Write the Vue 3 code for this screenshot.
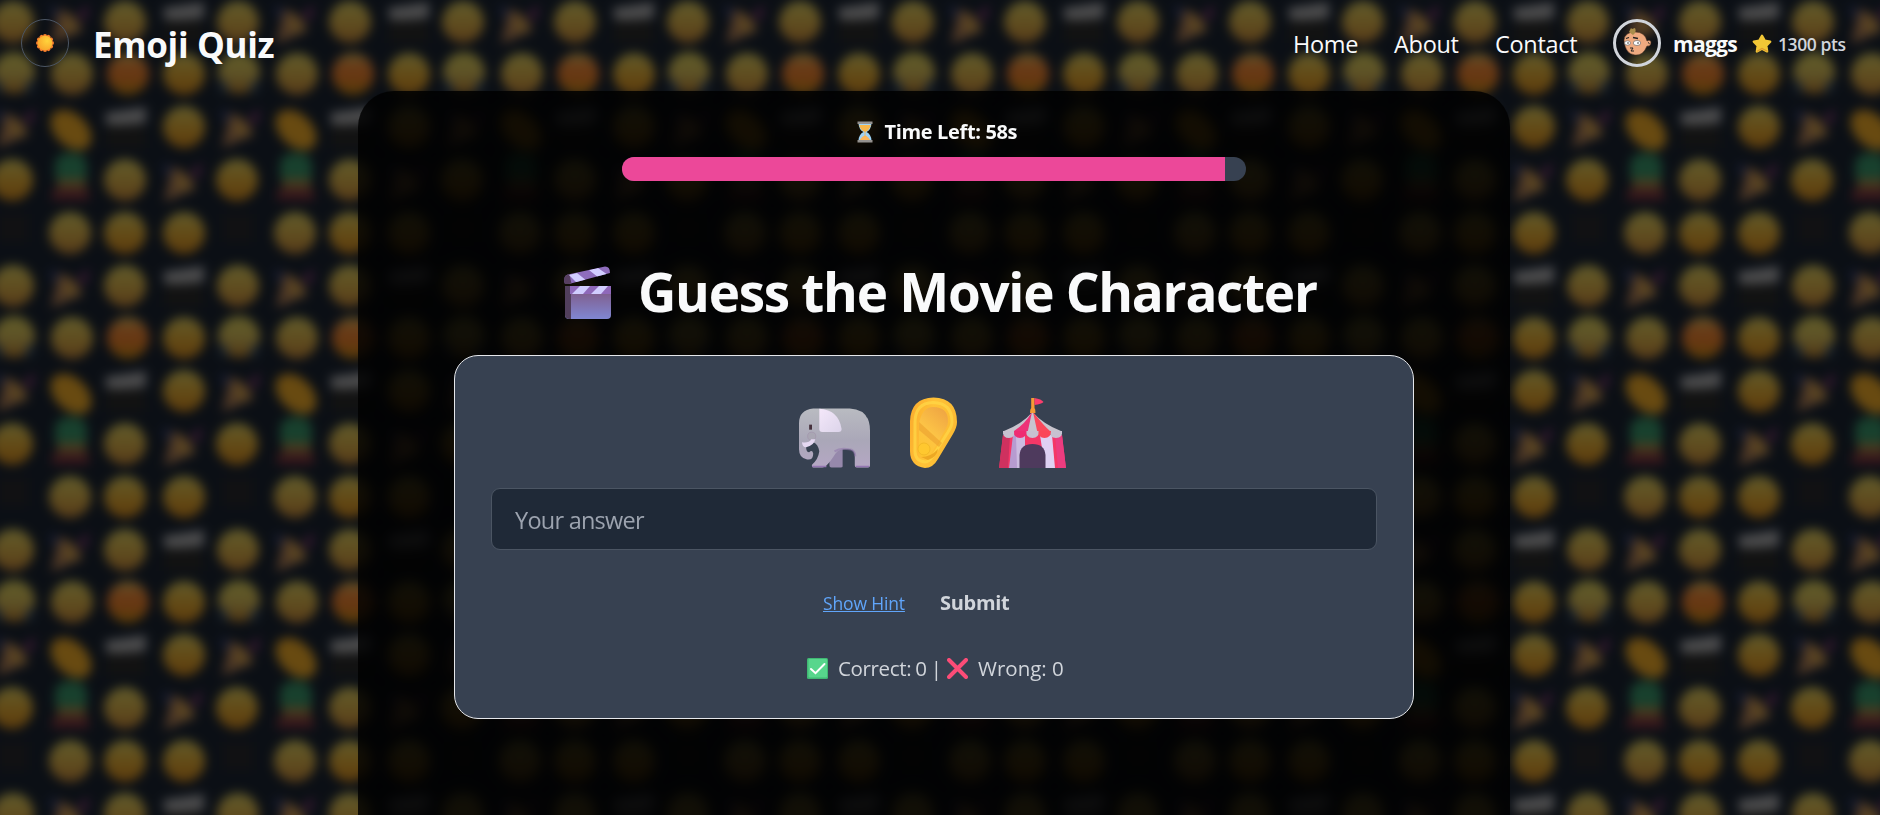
<script setup>
import { ref, computed } from 'vue'

const total = 60
const left = ref(58)
const barWidth = computed(() => (left.value / total) * 100 + '%')
const answer = ref('')
const correct = ref(0)
const wrong = ref(0)
const links = [
  { name: 'Home', cls: 'home' },
  { name: 'About', cls: 'about' },
  { name: 'Contact', cls: 'contact' },
]

// Backdrop tile: one entry per emoji in a 225x264 repeat
const balls = [
  [27, 28, 'a'], [139, 28, 'a'],
  [28, 79, 'c'], [86, 80, 'a'], [142, 80, 'd'], [198, 80, 'b'],
  [198, 133, 'b'],
  [26, 186, 'b'], [139, 186, 'a'],
  [84, 239, 'a'], [139, 239, 'b'], [198, 239, 'b'],
]
const poppers = [[82, 30], [28, 134], [195, 188]]
const clappers = [[198, 20], [140, 125]]
</script>

<template>
  <div class="page">
    <svg class="wallpaper" width="1920" height="855" viewBox="-20 -20 1920 855">
      <defs>
        <linearGradient id="ga" x1="0" y1="0" x2="0" y2="1">
          <stop offset="0" stop-color="#605a2b" /><stop offset=".5" stop-color="#604e20" /><stop offset="1" stop-color="#563a18" />
        </linearGradient>
        <linearGradient id="gb" x1="0" y1="0" x2="0" y2="1">
          <stop offset="0" stop-color="#605a2b" /><stop offset=".5" stop-color="#634b17" /><stop offset="1" stop-color="#5c3b0c" />
        </linearGradient>
        <linearGradient id="gc" x1="0" y1="0" x2="0" y2="1">
          <stop offset="0" stop-color="#605b28" /><stop offset=".5" stop-color="#5e5327" /><stop offset="1" stop-color="#503614" />
        </linearGradient>
        <linearGradient id="gd" x1="0" y1="0" x2="0" y2="1">
          <stop offset="0" stop-color="#60562a" /><stop offset=".3" stop-color="#683b18" /><stop offset=".55" stop-color="#683713" /><stop offset="1" stop-color="#563c08" />
        </linearGradient>
        <pattern id="tile" x="-14" y="-6" width="225" height="264" patternUnits="userSpaceOnUse">
          <circle v-for="(b, i) in balls" :key="'b' + i" :cx="b[0]" :cy="b[1]" r="21" :fill="`url(#g${b[2]})`" />
          <path d="M9 85l7 4v10l-7-1zM47 85l-7 4v10l7-1z" fill="#1a2632" />
          <g v-for="(p, i) in poppers" :key="'p' + i" :transform="`translate(${p[0]} ${p[1]})`">
            <path d="M-9-15Q8-12 15 7L-17 20z" fill="#4e3826" />
            <path d="M-5-8Q8-6 10 6L-2 8z" fill="#5c4720" />
            <path d="M-19-18l9 2-3 14z" fill="#181e38" />
            <path d="M9-9l12-11-3 17z" fill="#3a1a33" />
          </g>
          <g v-for="(c, i) in clappers" :key="'c' + i" :transform="`translate(${c[0]} ${c[1]})`">
            <path d="M-21-6L20-12V4L-19 8z" fill="#4c4c4d" />
            <rect x="-20" y="6" width="39" height="23" fill="#121212" />
          </g>
          <ellipse cx="85" cy="136" rx="24" ry="16" fill="#684a11" transform="rotate(44 85 136)" />
          <path d="M69 185v-13q0-13 16-13t16 13v13z" fill="#18402d" />
          <path d="M71 185h29v10H71z" fill="#49391e" />
          <path d="M66 196h37v10H66z" fill="#3b181c" />
          <rect x="12" y="220" width="30" height="28" fill="#111113" />
        </pattern>
      </defs>
      <rect x="-20" y="-20" width="1920" height="855" fill="#0b0f15" />
      <rect x="-20" y="-20" width="1920" height="855" fill="url(#tile)" />
    </svg>

    <header class="bar">
      <button class="theme" aria-label="Theme">
        <svg width="20" height="20" viewBox="-10 -10 20 20">
          <defs>
            <radialGradient id="sun" cx=".65" cy=".35" r=".7"><stop offset="0" stop-color="#ffd43c" /><stop offset="1" stop-color="#f9a52b" /></radialGradient>
          </defs>
          <g fill="#f9802d">
            <circle v-for="n in 12" :key="n" cx="0" cy="-7" r="2" :transform="`rotate(${n * 30})`" />
          </g>
          <circle r="7.300" fill="url(#sun)" />
        </svg>
      </button>
      <h1 class="brand">Emoji Quiz</h1>
      <nav class="nav">
        <a v-for="l in links" :key="l.name" :class="l.cls">{{ l.name }}</a>
      </nav>
      <div class="user">
        <span class="avatar">
          <svg width="42" height="42" viewBox="0 0 42 42">
            <path d="M8 18Q9 10 19 10Q29 10 31 19Q35 17 35 21Q34 25 31 24Q27 34 19 33Q9 32 8 18z" fill="#eeaa80" stroke="#4a3020" stroke-width=".5" />
            <path d="M13 10l2-4 1 1 3-1Q21 10 17 13z" fill="#a98d4b" />
            <path d="M10 16.500l3-1M17 15.500l5 1" stroke="#222" stroke-width="1.300" />
            <ellipse cx="11.500" cy="21" rx="3" ry="2.200" fill="#fff" stroke="#555" stroke-width=".6" />
            <ellipse cx="21" cy="21" rx="3.700" ry="2.500" fill="#fff" stroke="#555" stroke-width=".6" />
            <circle cx="12" cy="21" r=".7" /><circle cx="22" cy="21" r=".7" />
            <path d="M14 26h3l-2 3h3M32 20.500l1.500 1" stroke="#222" fill="none" stroke-width="1" />
          </svg>
        </span>
        <span class="name">maggs</span>
        <svg class="star" width="20" height="20" viewBox="0 0 20 20">
          <path d="M10 1.800l2.700 4.900 5.500 1-3.900 4 .8 5.700-5.100-2.600-5.100 2.600.8-5.700-3.900-4 5.500-1z" fill="#f2c736" stroke="#f2c736" stroke-width="2.400" stroke-linejoin="round" />
          <path d="M15.500 17.200l-5.500-2.700-5 2.800" fill="none" stroke="#dc9a30" stroke-width="1.200" />
        </svg>
        <span class="points">1300 pts</span>
      </div>
    </header>

    <main class="panel">
      <div class="timer">
        <svg width="16" height="22" viewBox="0 0 16 22">
          <path d="M1.500 2.500h13Q14 9 9.500 11q4.500 2 5 8.500h-13Q2 13 6.500 11 2 9 1.500 2.500z" fill="#9fd3f5" />
          <path d="M2.300 4h11.400Q13 9 8 11 3 9 2.300 4z" fill="#f7b64a" /><path d="M2.500 19.500Q5 15 8 14.500q3 .5 5.500 5z" fill="#fbb65c" />
          <path d="M7.600 10h.8v6h-.8z" fill="#f8b34d" />
          <path d="M.5.500h15V3H.5zM.5 19h15v2.500H.5z" fill="#94918f" />
        </svg>
        <span class="time-text">Time Left: {{ left }}s</span>
      </div>
      <div class="track"><div class="fill" :style="{ width: barWidth }"></div></div>

      <h2 class="title">
        <svg width="48" height="54" viewBox="0 0 48 54">
          <defs>
            <linearGradient id="cb" x1="0" y1="0" x2="0" y2="1"><stop offset="0" stop-color="#80608f" /><stop offset="1" stop-color="#8087d3" /></linearGradient>
            <clipPath id="arm"><path d="M.5 12Q1 9 4 8.500L41 .6Q46 .500 46 7L5 18 1 18Q0 16 .5 12z" /></clipPath>
            <clipPath id="strip"><path d="M1 20h46v8H1z" /></clipPath>
          </defs>
          <g clip-path="url(#arm)">
            <path d="M0 0h48v20H0z" fill="#8e6dbd" /><path d="M0 6h5l3 14H0z" fill="#573f60" />
            <path d="M5 9l8-2 10 8-9 3zM25 4l9-2 10 7-9 3z" fill="#d1cdff" />
          </g>
          <path d="M1 27h46v22q0 4-4 4H5q-4 0-4-4z" fill="url(#cb)" />
          <path d="M1 20h6v33H5q-4-.5-4-4z" fill="#513f5c" />
          <g clip-path="url(#strip)"><path d="M6 20h42v8H6z" fill="#8f68ba" /><path d="M16 20h10l-7 8H8zM35 20h9l-7 8H27z" fill="#d1cdff" /></g>
        </svg>
        <span class="title-text">Guess the Movie Character</span>
      </h2>

      <section class="card">
        <div class="emojis">
          <svg width="72" height="60" viewBox="0 0 71 59.500" preserveAspectRatio="none">
            <defs>
              <linearGradient id="el" x1="0" y1="0" x2="0" y2="1"><stop offset="0" stop-color="#b9bbc1" /><stop offset=".55" stop-color="#aaa7b8" /><stop offset="1" stop-color="#b5a7c4" /></linearGradient>
              <linearGradient id="er" x1="0" y1="0" x2="1" y2="1"><stop offset="0" stop-color="#f4e8fa" /><stop offset="1" stop-color="#dcd4ea" /></linearGradient>
            </defs>
            <path d="M31 40h13v18q0 1-2 1H33q-2 0-2-2z" fill="#9688ab" />
            <path d="M15 .5h36q20 1 20 22V57q0 2-2 2H58q-2 0-2-2V46q-1-5-7-5-8-1-12 4-5 8-9 12-2 2-4 2H15q-2-1-1-3 6-5 7-13-1-7-6-9-5 2-7 5 0 5 3 5 3-3 4 1 0 7-6 6-8-1-8-10V15Q1 2 15 .5z" fill="url(#el)" />
            <path d="M36 43q6-4 14-2 6 0 6.500 7" fill="none" stroke="#8d72a9" stroke-width="2" opacity=".5" />
            <path d="M14 58h14M57 58h13" stroke="#9476b2" stroke-width="1.500" />
            <circle cx="13.500" cy="28" r="4" fill="#a9a6b3" stroke="#a195ac" stroke-width=".7" />
            <path d="M21 .8q19 1 22 20 0 3-3 3H24q-3 0-3-3z" fill="url(#er)" />
            <path d="M4 34q7 1 9-3l4 0q-1 6-9 8-4 0-4-5z" fill="#e5d8f2" /><path d="M11 16.500h2.800v5H11z" fill="#45303c" />
          </svg>
          <svg width="47" height="72" viewBox="0 0 47 72">
            <defs>
              <linearGradient id="ear" x1="0" y1="0" x2="1" y2=".3"><stop offset="0" stop-color="#faaa2d" /><stop offset=".5" stop-color="#ffc237" /><stop offset="1" stop-color="#fbba33" /></linearGradient>
              <linearGradient id="inn" x1=".7" y1="0" x2=".2" y2="1"><stop offset="0" stop-color="#f0a743" /><stop offset=".5" stop-color="#fcc346" /><stop offset="1" stop-color="#ffc52f" /></linearGradient>
            </defs>
            <path d="M23.500.5Q47 1 47 25q0 5-4 12L28 62q-5 9-13 9Q0 69 0 54V24Q1 1 23.500.5z" fill="url(#ear)" />
            <path d="M23 5.500Q42 6 42 25q0 4-4 10L23 59q-4 6-8 6-10-1-10-11V26Q5 6 23 5.500z" fill="none" stroke="#ffd747" stroke-width="3" opacity=".75" />
            <path d="M9 27Q12 10 23 10q15 0 15 14 0 5-4 11L21 57q-4 5-7 4-5-2-5-8z" fill="url(#inn)" />
            <path d="M9 25v8l20 17 3-4z" fill="#eba02f" opacity=".6" />
            <path d="M11 60q10 0 17-8-1 8-10 11z" fill="#eda823" />
            <circle cx="14" cy="52" r="6" fill="#ffc82f" stroke="#efb526" stroke-width=".8" />
          </svg>
          <svg width="67" height="72" viewBox="0 0 67 72">
            <path d="M4 38h59l4 33H0z" fill="#f43767" />
            <path d="M4 38h7L9 71H0z" fill="#cf315f" /><path d="M14 38h12l-4 33H10z" fill="#b79bd0" />
            <path d="M17 38h9v33h-8z" fill="#ccbbe0" /><path d="M41 38h12l3 33H46z" fill="#dfd0f2" /><path d="M56 38h7l4 33H59z" fill="#ec3c7f" />
            <path d="M20.500 71V58q1-11 13-11t13 11v13z" fill="#4e3a5d" />
            <path d="M33.500 15Q23 27 5 34l-1 3h59l-1-3Q44 27 33.500 15z" fill="#c8c4ce" />
            <path d="M33 15Q26 27 15 34v4h13z" fill="#ed3278" />
            <path d="M34 15Q45 29 51 34v4H39z" fill="#fa485b" />
            <g>
              <path d="M4 34h12q0 7-6 7t-6-6zM27 34h13q0 7-6.500 7T27 34zM51 34h12q1 7-6 7t-6-7z" fill="#c7c1d0" />
              <path d="M15 34h12.500q0 7-6.500 7t-6-7z" fill="#ef2c72" /><path d="M39.500 34H52q0 7-6.500 7t-6-7z" fill="#fb4659" />
            </g>
            <path d="M32.200 1h3.300v10q1 1 1 5h-5.500q0-4 1.200-5z" fill="#f59c35" /><path d="M35.500 1q7 1 9 4-2 2-9 3z" fill="#fb3e6d" />
          </svg>
        </div>
        <input v-model="answer" class="answer" type="text" placeholder="Your answer" />
        <div class="actions">
          <a class="hint">Show Hint</a>
          <button class="submit">Submit</button>
        </div>
        <div class="score">
          <svg width="21" height="21" viewBox="0 0 21 21">
            <rect width="21" height="21" rx="1.500" fill="#40b873" /><rect x="1.500" y="1" width="18.500" height="18.500" rx="1" fill="#57d68c" />
            <path d="M4 11l4.500 4.200L17.500 6" fill="none" stroke="#fff" stroke-width="2" stroke-linecap="round" />
          </svg>
          <span class="correct">Correct: {{ correct }} |</span>
          <svg width="21" height="21" viewBox="0 0 21 21">
            <path d="M2 2l17 17M19 2L2 19" stroke="#fc4c77" stroke-width="4" stroke-linecap="round" />
          </svg>
          <span class="wrong">Wrong: {{ wrong }}</span>
        </div>
      </section>
    </main>
  </div>
</template>

<style>
html, body { margin: 0; background: #0b0f15; overflow: hidden; }
</style>

<style scoped>
.page {
  position: relative;
  width: 1880px;
  height: 815px;
  overflow: hidden;
  font-family: "Open Sans", "Noto Sans", sans-serif;
  color: #f9fafb;
  white-space: nowrap;
}
.page * { box-sizing: border-box; }
.wallpaper { position: absolute; left: -20px; top: -20px; filter: blur(5.500px); }
svg { display: block; flex: none; }
.bar {
  position: relative;
  display: flex;
  height: 91px;
  padding: 19px 0 0 21px;
}
.theme {
  display: grid;
  place-items: center;
  width: 48px;
  height: 48px;
  padding: 0;
  border: 1px solid #4b5563;
  border-radius: 50%;
  background: transparent;
}
.brand {
  margin: 2px 0 0 24px;
  width: 1200px;
  font-size: 35px;
  line-height: 48px;
  font-weight: 700;
  letter-spacing: -0.35px;
}
.nav { display: flex; font-size: 23.500px; line-height: 50px; letter-spacing: -0.3px; }
.home { width: 101px; }
.about { width: 101px; }
.contact { width: 118px; }
.user { display: flex; }
.avatar { width: 48px; height: 48px; border: 3px solid #d1d5db; border-radius: 50%; }
.name { width: 79px; padding-left: 12px; font-size: 21px; font-weight: 700; line-height: 50px; letter-spacing: -0.7px; }
.star { margin: 15px 0 0 12px; }
.points { margin-left: 6px; font-size: 17.500px; font-weight: 650; line-height: 50px; letter-spacing: -0.4px; color: #d1d5db; }
.panel {
  position: relative;
  display: flex;
  flex-direction: column;
  align-items: center;
  width: 1152px;
  height: 724px;
  margin: 0 0 0 358px;
  border-radius: 36px 36px 0 0;
  background: rgba(0, 0, 0, 0.81);
  backdrop-filter: blur(4px);
}
.timer { display: flex; width: 160px; height: 22px; margin: 30px 0 0 5px; align-items: center; }
.time-text { margin-left: 12px; font-size: 20px; font-weight: 700; line-height: 22px; letter-spacing: -0.35px; }
.track { width: 624px; height: 24px; margin-top: 14px; border-radius: 12px; background: #374151; overflow: hidden; }
.fill { height: 100%; background: #ec4899; }
.title { display: flex; align-items: center; width: 754px; height: 54px; margin: 85px 0 0 14px; font-size: 53px; font-weight: 700; }
.title-text { margin-left: 26px; line-height: 54px; letter-spacing: -1.27px; transform: translateY(-1px); }
.card {
  display: flex;
  flex-direction: column;
  width: 960px;
  height: 364px;
  margin-top: 35px;
  padding: 41px 36px 0;
  border: 1px solid #e5e7eb;
  border-radius: 24px;
  background: #374151;
}
.emojis { display: flex; align-items: flex-end; height: 72px; padding-left: 307px; }
.emojis svg:nth-child(1) { margin-bottom: 1px; }
.emojis svg:nth-child(2) { margin-left: 40px; }
.emojis svg:nth-child(3) { margin-left: 42px; }
.answer {
  width: 886px;
  height: 62px;
  margin-top: 19px;
  padding: 2px 24px 0 23px;
  border: 1px solid #4b5563;
  border-radius: 9px;
  background: #1f2937;
  color: #f9fafb;
  font-family: inherit;
  font-size: 23.500px;
  letter-spacing: -0.75px;
}
.answer::placeholder { color: #9ca3af; opacity: 1; }
.actions { display: flex; align-items: baseline; height: 30px; margin: 38px 0 0 332px; }
.hint { width: 117px; color: #60a5fa; font-size: 17.500px; line-height: 30px; letter-spacing: -0.15px; text-decoration: underline; }
.submit { padding: 0; border: 0; background: none; color: #d1d5db; font-family: inherit; font-size: 20px; font-weight: 700; line-height: 30px; letter-spacing: -0.3px; }
.score { display: flex; align-items: center; height: 28px; margin: 36px 0 0 316px; color: #d1d5db; font-size: 20.500px; line-height: 28px; }
.correct { width: 109px; margin-left: 10px; letter-spacing: -0.35px; word-spacing: -0.900px; }
.wrong { margin-left: 10px; }
</style>
